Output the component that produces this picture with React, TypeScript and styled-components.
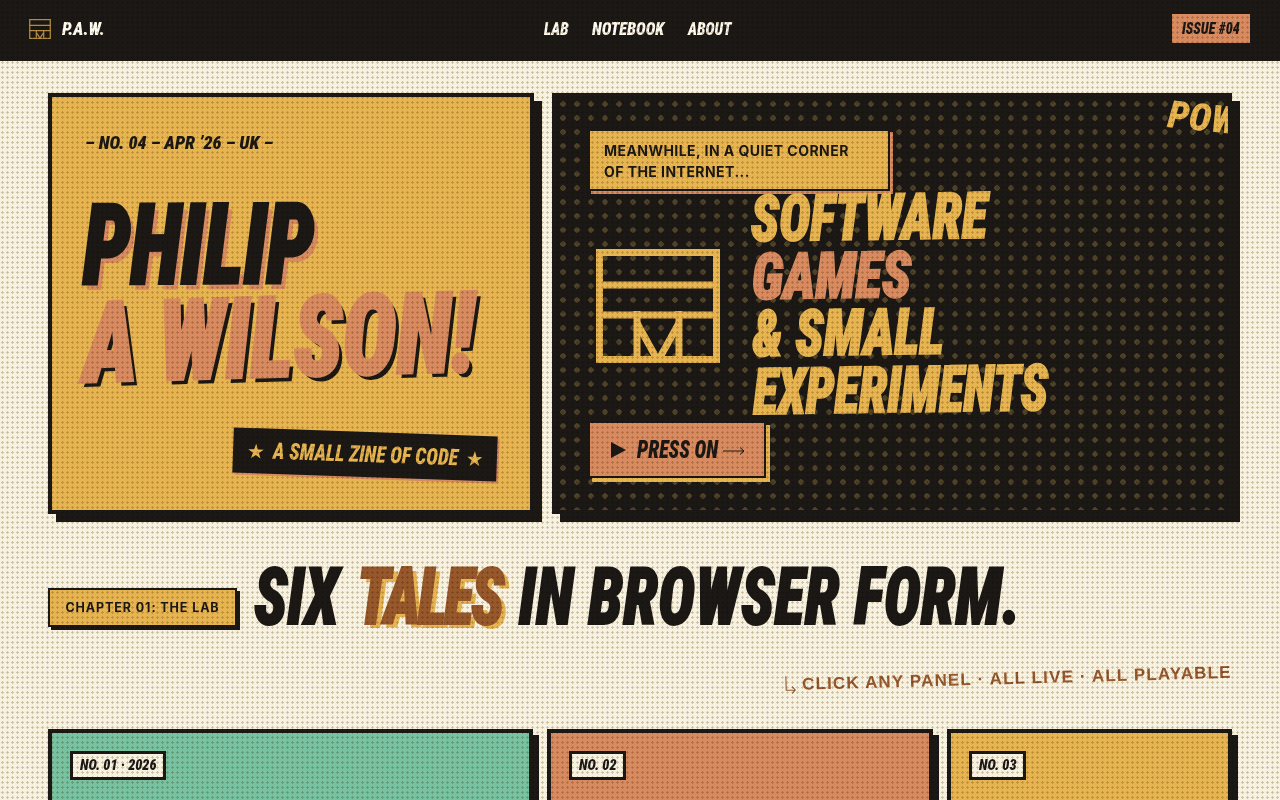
import React from "react";
import styled, { createGlobalStyle } from "styled-components";

const INK = "#1c1815";
const MUSTARD = "#e6b450";
const CORAL = "#d88a60";
const CREAM = "#f7f1e1";
const RUST = "#97582c";
const TEAL = "#78c2a2";
const COMIC = `Roboto, "Liberation Sans", sans-serif`;

const Global = createGlobalStyle`
  html, body { margin: 0; padding: 0; background: ${CREAM}; height: 800px; overflow: hidden; }
  * { box-sizing: border-box; }
  body { font-family: Inter, sans-serif; color: ${INK}; }
`;

const Page = styled.div`
  position: relative;
  width: 1280px;
  height: 800px;
  overflow: hidden;
`;

const Halftone = styled.div`
  position: absolute;
  inset: 0;
  pointer-events: none;
  z-index: 20;
  mix-blend-mode: multiply;
  background-image: radial-gradient(circle at 2.5px 2.5px, #d6cfb9 1.2px, transparent 1.2px);
  background-size: 5px 5px;
`;

const Comic = styled.span<{ $size: number; $sx?: number; $w: number }>`
  display: inline-block;
  width: ${(p) => p.$w}px;
  font-family: ${COMIC};
  font-weight: 900;
  font-stretch: 75%;
  font-style: italic;
  font-size: ${(p) => p.$size}px;
  line-height: 1;
  white-space: nowrap;
  transform-origin: left center;
  transform: scaleX(${(p) => p.$sx ?? 1});
`;

const Nav = styled.header`
  height: 61px;
  background: ${INK};
  display: grid;
  grid-template-columns: 1fr auto 1fr;
  align-items: center;
  padding: 0 30px 4px 29px;
`;
const Brand = styled.div`
  display: flex;
  align-items: center;
  gap: 11px;
  color: #fffaf0;
`;
const NavLinks = styled.nav`
  display: flex;
  gap: 24px;
  color: #fffaf0;
  margin-left: -3px;
`;
const IssueWrap = styled.div`
  display: flex;
  justify-content: flex-end;
`;
const Issue = styled.div`
  width: 78px;
  height: 29px;
  background: ${CORAL};
  color: ${INK};
  display: flex;
  align-items: center;
  justify-content: center;
`;

const Main = styled.main`
  padding: 32px 48px 0;
`;
const Hero = styled.section`
  display: grid;
  grid-template-columns: 486px 680px;
  gap: 18px;
  height: 421px;
`;
const Left = styled.div`
  position: relative;
  border: 4px solid ${INK};
  background: ${MUSTARD};
  box-shadow: 8px 8px 0 ${INK};
  padding: 36px 33px;
`;
const Right = styled.div`
  position: relative;
  border: 4px solid ${INK};
  background-color: ${INK};
  background-image: radial-gradient(circle at 7px 7px, #4e4229 2.5px, transparent 3px);
  background-size: 14px 14px;
  box-shadow: 8px 8px 0 ${INK};
  padding: 32px;
  overflow: hidden;
`;
const Dateline = styled.div`
  color: ${INK};
`;
const Name = styled.h1`
  margin: 0;
  position: absolute;
  left: 31px;
  top: 103px;
  font: inherit;
`;
const NameLine = styled.span<{ $ink?: boolean; $sx: number; $rot: number }>`
  display: block;
  height: 92px;
  margin-bottom: 6px;
  font-family: ${COMIC};
  font-weight: 900;
  font-stretch: 75%;
  font-style: italic;
  font-size: 112px;
  line-height: 92px;
  white-space: nowrap;
  transform-origin: left center;
  -webkit-text-stroke: 3px ${(p) => (p.$ink ? INK : CORAL)};
  color: ${(p) => (p.$ink ? INK : CORAL)};
  text-shadow: ${(p) => (p.$ink ? `6px 6px 0 ${CORAL}` : `5px 5px 0 ${INK}`)};
  transform: rotate(${(p) => p.$rot}deg) scaleX(${(p) => p.$sx});
`;
const Strip = styled.div`
  position: absolute;
  left: 181px;
  top: 335px;
  width: 264px;
  height: 45px;
  background: ${INK};
  color: ${MUSTARD};
  box-shadow: 2px 2px 0 ${CORAL};
  transform: rotate(2deg);
  display: flex;
  align-items: center;
  padding-left: 14px;
  gap: 8px;
`;
const Star = styled.span`
  font-family: "DejaVu Sans", sans-serif;
  font-size: 20px;
  line-height: 1;
`;
const Caption = styled.div`
  width: 302px;
  height: 62px;
  background: ${MUSTARD};
  border: 2px solid ${INK};
  box-shadow: 3px 3px 0 ${CORAL};
  font-size: 14px;
  line-height: 21px;
  font-weight: 700;
  letter-spacing: 0.45px;
  padding: 9px 14px;
  color: ${INK};
  white-space: nowrap;
`;
const RightBody = styled.div`
  display: flex;
  gap: 32px;
  align-items: center;
  height: 230px;
`;
const MarkSlot = styled.div`
  margin-left: 8px;
  flex: none;
`;
const MarkSvg = styled.svg`
  display: block;
`;
const Stack = styled.div`
  display: flex;
  flex-direction: column;
  transform: rotate(-0.8deg);
  transform-origin: left center;
`;
const StackLine = styled.span<{ $c: string; $sx: number }>`
  display: block;
  height: 57.5px;
  font-family: ${COMIC};
  font-weight: 900;
  font-stretch: 75%;
  font-style: italic;
  font-size: 64px;
  line-height: 57.5px;
  white-space: nowrap;
  color: ${(p) => p.$c};
  -webkit-text-stroke: 2px ${(p) => p.$c};
  transform-origin: left center;
  transform: scaleX(${(p) => p.$sx});
`;
const Press = styled.div`
  width: 178px;
  height: 57px;
  background: ${CORAL};
  border: 2px solid ${INK};
  box-shadow: 4px 4px 0 ${MUSTARD};
  color: ${INK};
  display: flex;
  align-items: center;
  padding-left: 21px;
  gap: 11px;
`;
const Triangle = styled.span`
  width: 0;
  height: 0;
  flex: none;
  border-left: 15px solid ${INK};
  border-top: 8px solid transparent;
  border-bottom: 8px solid transparent;
`;
const ArrowSvg = styled.svg`
  display: block;
  flex: none;
  margin-left: -5px;
  margin-top: 2px;
`;
const PowText = styled.span`
  position: absolute;
  left: 612px;
  top: -3px;
  display: block;
  font-family: ${COMIC};
  font-weight: 900;
  font-stretch: 75%;
  font-style: italic;
  font-size: 38px;
  line-height: 40px;
  white-space: nowrap;
  color: ${MUSTARD};
  transform-origin: left center;
  transform: rotate(6deg) scaleX(1);
`;

const ChapterRow = styled.section`
  display: flex;
  align-items: flex-end;
  gap: 17px;
  margin-top: 41px;
  height: 80px;
`;
const Chapter = styled.div`
  flex: none;
  width: 189px;
  height: 39px;
  margin-bottom: 8px;
  background: ${MUSTARD};
  border: 2px solid ${INK};
  box-shadow: 3px 3px 0 ${INK};
  font-size: 12.5px;
  font-weight: 700;
  letter-spacing: 0.9px;
  display: flex;
  align-items: center;
  justify-content: center;
  white-space: nowrap;
`;
const Title = styled.h2`
  margin: 0;
  height: 80px;
  display: flex;
  flex: none;
  gap: 23px;
  transform: scaleX(0.78);
  transform-origin: left center;
  font-family: ${COMIC};
  font-weight: 900;
  font-stretch: 75%;
  font-style: italic;
  font-size: 80px;
  line-height: 84px;
  color: ${INK};
  -webkit-text-stroke: 2px ${INK};
  white-space: nowrap;
`;
const Tales = styled.span`
  color: ${RUST};
  letter-spacing: -3.5px;
  margin-right: -1px;
  -webkit-text-stroke: 2px ${RUST};
  text-shadow: 6px 4px 0 ${MUSTARD};
`;
const TitleRest = styled.span`
  letter-spacing: 0.7px;
`;

const Scrawl = styled.div`
  display: flex;
  justify-content: flex-end;
  margin-top: 24px;
  height: 40px;
  color: ${RUST};
`;
const ScrawlText = styled.div`
  display: flex;
  align-items: center;
  gap: 6px;
  font-family: "Liberation Sans", sans-serif;
  font-size: 17px;
  font-weight: 700;
  letter-spacing: 1.15px;
  white-space: nowrap;
  transform: rotate(-1.6deg);
`;

const Cards = styled.section`
  display: grid;
  grid-template-columns: 485px 386px 285px;
  gap: 14px;
  margin-top: 30px;
`;
const Card = styled.article<{ $bg: string }>`
  height: 200px;
  background: ${(p) => p.$bg};
  border: 4px solid ${INK};
  box-shadow: 6px 6px 0 ${INK};
  padding: 18px;
`;
const Tag = styled.div`
  display: inline-flex;
  align-items: center;
  height: 29px;
  padding: 0 7px;
  background: ${CREAM};
  border: 3px solid ${INK};
  color: ${INK};
`;

function Mark({ w, h, c }: { w: number; h: number; c: string }) {
  return (
    <MarkSvg width={w} height={h} viewBox="0 0 124 114" fill="none" stroke={c} strokeWidth={7}>
      <rect x="3.5" y="3.5" width="117" height="107" />
      <path d="M0 36H124M0 66H124" />
      <path d="M41 62V111M83 62V111" />
      <path d="M41 74L62 112L83 74" />
    </MarkSvg>
  );
}

export default function App() {
  return (
    <Page>
      <Global />
      <Nav>
        <Brand>
          <Mark w={22} h={20} c="#b48c3f" />
          <Comic $size={18} $sx={0.96} $w={42}>P.A.W.</Comic>
        </Brand>
        <NavLinks>
          <Comic $size={19} $sx={0.8} $w={24}>LAB</Comic>
          <Comic $size={19} $sx={0.86} $w={72}>NOTEBOOK</Comic>
          <Comic $size={19} $sx={0.81} $w={44}>ABOUT</Comic>
        </NavLinks>
        <IssueWrap>
          <Issue>
            <Comic $size={16} $sx={0.88} $w={58}>ISSUE #04</Comic>
          </Issue>
        </IssueWrap>
      </Nav>
      <Main>
        <Hero>
          <Left>
            <Dateline>
              <Comic $size={18} $sx={1.01} $w={188}>– NO. 04 – APR ’26 – UK –</Comic>
            </Dateline>
            <Name>
              <NameLine $ink $sx={0.76} $rot={-0.3}>PHILIP</NameLine>
              <NameLine $sx={0.825} $rot={-1.6}>A WILSON!</NameLine>
            </Name>
            <Strip>
              <Star>★</Star>
              <Comic $size={23} $sx={0.86} $w={185}>A SMALL ZINE OF CODE</Comic>
              <Star>★</Star>
            </Strip>
          </Left>
          <Right>
            <PowText>POW!</PowText>
            <Caption>MEANWHILE, IN A QUIET CORNER<br />OF THE INTERNET...</Caption>
            <RightBody>
              <MarkSlot>
                <Mark w={124} h={114} c={MUSTARD} />
              </MarkSlot>
              <Stack>
                <StackLine $c={MUSTARD} $sx={0.83}>SOFTWARE</StackLine>
                <StackLine $c={CORAL} $sx={0.858}>GAMES</StackLine>
                <StackLine $c={MUSTARD} $sx={0.83}>&amp; SMALL</StackLine>
                <StackLine $c={MUSTARD} $sx={0.805}>EXPERIMENTS</StackLine>
              </Stack>
            </RightBody>
            <Press>
              <Triangle />
              <Comic $size={25} $sx={0.8} $w={80}>PRESS ON</Comic>
              <ArrowSvg width="22" height="10" viewBox="0 0 22 10" fill="none" stroke={INK} strokeWidth="1">
                <path d="M0 5H21M17 1.5L21 5L17 8.5" />
              </ArrowSvg>
            </Press>
          </Right>
        </Hero>
        <ChapterRow>
          <Chapter>CHAPTER 01: THE LAB</Chapter>
          <Title>
            <span>SIX</span>
            <Tales>TALES</Tales>
            <TitleRest>IN BROWSER FORM.</TitleRest>
          </Title>
        </ChapterRow>
        <Scrawl>
          <ScrawlText>
            <svg width="12" height="20" viewBox="0 0 12 20" fill="none" stroke={RUST} strokeWidth="1.1">
              <path d="M2 1V15H11M8 11.5L11 15L8 18.5" />
            </svg>
            CLICK ANY PANEL · ALL LIVE · ALL PLAYABLE
          </ScrawlText>
        </Scrawl>
        <Cards>
          <Card $bg={TEAL}><Tag><Comic $size={15} $sx={0.95} $w={76}>NO. 01 · 2026</Comic></Tag></Card>
          <Card $bg={CORAL}><Tag><Comic $size={15} $sx={0.95} $w={37}>NO. 02</Comic></Tag></Card>
          <Card $bg={MUSTARD}><Tag><Comic $size={15} $sx={0.95} $w={37}>NO. 03</Comic></Tag></Card>
        </Cards>
      </Main>
      <Halftone />
    </Page>
  );
}
